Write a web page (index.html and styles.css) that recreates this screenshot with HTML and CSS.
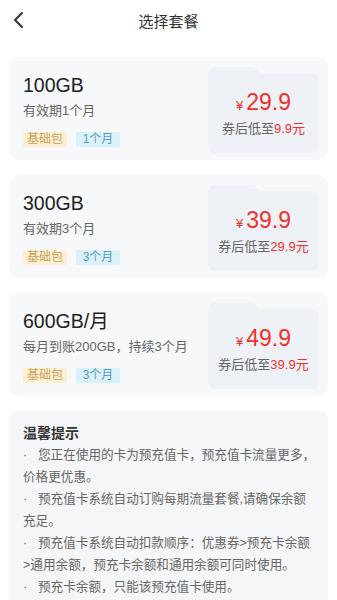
FILE: index.html
```html
<!DOCTYPE html>
<html lang="zh">
<head>
<meta charset="utf-8">
<title>选择套餐</title>
<link rel="stylesheet" href="styles.css">
</head>
<body>
<header class="nav">
  <svg class="back" width="12" height="18" viewBox="0 0 12 18"><path d="M10 2 L3 9 L10 16" fill="none" stroke="#333" stroke-width="2" stroke-linecap="round" stroke-linejoin="round"/></svg>
  <h1 class="title">选择套餐</h1>
</header>
<main class="list">
  <section class="plan">
    <div class="info">
      <div class="name">100GB</div>
      <div class="desc">有效期1个月</div>
      <div class="tags"><span class="tag tag-base">基础包</span><span class="tag tag-time">1个月</span></div>
    </div>
    <div class="price">
      <svg class="price-bg" width="111" height="86" viewBox="0 0 111 86"><path d="M0,8 Q0,0 8,0 L43,0 Q47,0 49,3 L51,5 Q52,6 56,6 L103,6 Q111,6 111,14 L111,78 Q111,86 103,86 L8,86 Q0,86 0,78 Z" fill="#eef1f5"/></svg>
      <div class="amount"><span class="yen">¥</span>29.9</div>
      <div class="coupon">券后低至<span class="red">9.9元</span></div>
    </div>
  </section>
  <section class="plan">
    <div class="info">
      <div class="name">300GB</div>
      <div class="desc">有效期3个月</div>
      <div class="tags"><span class="tag tag-base">基础包</span><span class="tag tag-time">3个月</span></div>
    </div>
    <div class="price">
      <svg class="price-bg" width="111" height="86" viewBox="0 0 111 86"><path d="M0,8 Q0,0 8,0 L43,0 Q47,0 49,3 L51,5 Q52,6 56,6 L103,6 Q111,6 111,14 L111,78 Q111,86 103,86 L8,86 Q0,86 0,78 Z" fill="#eef1f5"/></svg>
      <div class="amount"><span class="yen">¥</span>39.9</div>
      <div class="coupon">券后低至<span class="red">29.9元</span></div>
    </div>
  </section>
  <section class="plan">
    <div class="info">
      <div class="name">600GB/月</div>
      <div class="desc">每月到账200GB，持续3个月</div>
      <div class="tags"><span class="tag tag-base">基础包</span><span class="tag tag-time">3个月</span></div>
    </div>
    <div class="price">
      <svg class="price-bg" width="111" height="86" viewBox="0 0 111 86"><path d="M0,8 Q0,0 8,0 L43,0 Q47,0 49,3 L51,5 Q52,6 56,6 L103,6 Q111,6 111,14 L111,78 Q111,86 103,86 L8,86 Q0,86 0,78 Z" fill="#eef1f5"/></svg>
      <div class="amount"><span class="yen">¥</span>49.9</div>
      <div class="coupon">券后低至<span class="red">39.9元</span></div>
    </div>
  </section>
  <section class="tips">
    <h2 class="tips-title">温馨提示</h2>
    <p class="tip"><span class="dot">·</span>您正在使用的卡为预充值卡，预充值卡流量更多，<br>价格更优惠。</p>
    <p class="tip"><span class="dot">·</span>预充值卡系统自动订购每期流量套餐,请确保余额<br>充足。</p>
    <p class="tip"><span class="dot">·</span>预充值卡系统自动扣款顺序：优惠券&gt;预充卡余额<br>&gt;通用余额，预充卡余额和通用余额可同时使用。</p>
    <p class="tip"><span class="dot">·</span>预充卡余额，只能该预充值卡使用。</p>
  </section>
</main>
</body>
</html>
```
FILE: styles.css
```css
* { box-sizing: border-box; }
html, body { margin: 0; padding: 0; background: #fff; }
body {
  font-family: "Liberation Sans", "Noto Sans CJK SC", sans-serif;
  color: #333;
  width: 337px;
  overflow: hidden;
}
.nav {
  position: relative;
  height: 40px;
  display: flex;
  align-items: center;
  justify-content: center;
}
.back {
  position: absolute;
  left: 12px;
  top: 11px;
}
.title {
  margin: 0;
  font-size: 15px;
  font-weight: normal;
  color: #333;
  font-family: "Noto Sans CJK SC", sans-serif;
}
.list {
  display: flex;
  flex-direction: column;
  gap: 15px;
  padding: 17px 9px 0 9px;
}
.plan {
  display: flex;
  align-items: center;
  background: #f6f8fa;
  border-radius: 10px;
  padding: 10px 9px 7px 14px;
}
.info {
  flex: 1;
  display: flex;
  flex-direction: column;
}
.name {
  font-size: 19.5px;
  line-height: 24px;
  color: #222;
}
.desc {
  margin-top: 5px;
  font-size: 13px;
  line-height: 18px;
  color: #666;
}
.tags {
  margin-top: 12px;
  display: flex;
  gap: 9px;
}
.tag {
  min-width: 44px;
  height: 15px;
  line-height: 15px;
  font-size: 12px;
  text-align: center;
  border-radius: 2px;
  padding: 0 4px;
}
.tag-base { background: #fcefd2; color: #c9a25a; }
.tag-time { background: #d8f1fa; color: #5d9db3; }
.price {
  position: relative;
  width: 111px;
  height: 86px;
  display: flex;
  flex-direction: column;
  align-items: center;
  justify-content: center;
  padding-top: 6px;
}
.price-bg {
  position: absolute;
  left: 0;
  top: 0;
}
.amount {
  position: relative;
  font-size: 23px;
  line-height: 27px;
  color: #f0302e;
}
.yen {
  font-size: 13px;
  margin-right: 3px;
}
.coupon {
  position: relative;
  font-size: 13px;
  line-height: 18px;
  color: #666;
  margin-top: 1px;
}
.red { color: #f0302e; }
.tips {
  background: #f5f6f8;
  border-radius: 8px;
  padding: 12px 8px 10px 14px;
  margin-bottom: 20px;
}
.tips-title {
  margin: 0;
  font-size: 14px;
  line-height: 20px;
  font-weight: bold;
  color: #333;
}
.tip {
  margin: 1px 0 0;
  font-size: 12.6px;
  line-height: 22px;
  color: #666;
  white-space: nowrap;
}
.tip + .tip { margin-top: 0; }
.dot {
  display: inline-block;
  width: 15px;
}
```
